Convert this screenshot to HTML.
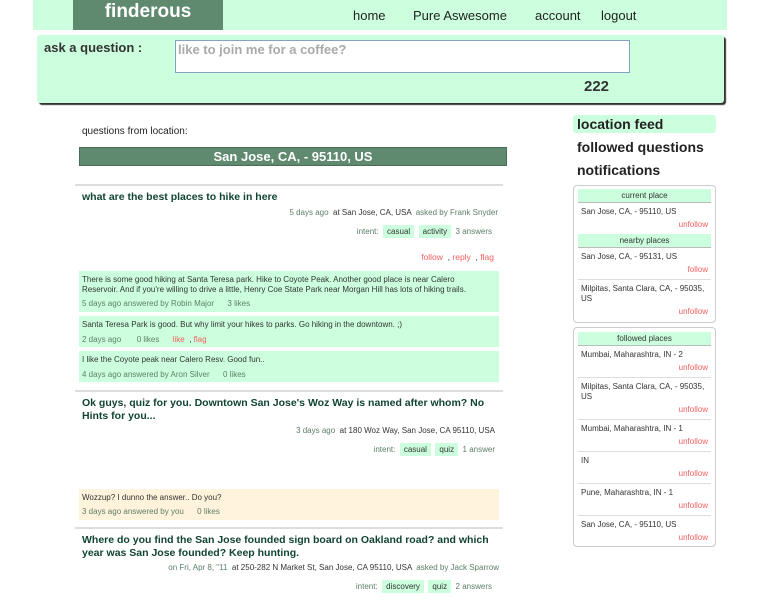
<!DOCTYPE html>
<html><head><meta charset="utf-8"><style>
*{margin:0;padding:0;box-sizing:border-box}
body{width:768px;height:600px;background:#fff;font-family:"Liberation Sans",sans-serif;position:relative;overflow:hidden;color:#222}
.a{position:absolute;white-space:nowrap}
.s{font-size:8px;color:#333}
.g{color:#5d7f68}
.r{color:#f06060}
.hd{font-weight:bold;font-size:10.5px;color:#143;}
.tag{background:#ccffdd;padding:2px 4px;color:#333}
.ans{position:absolute;left:79px;width:420px;background:#ccffdd}
.sep{position:absolute;left:75px;width:428px;height:2px;background:#ddd}
.box{position:absolute;left:573px;width:143px;border:1px solid #ccc;border-radius:4px;background:#fff}
.bh{background:#ccffdd;text-align:center;font-size:8px;color:#333;height:14px;line-height:14px;margin:0 4px;border-bottom:1px solid #bbb}
.it{font-size:8px;color:#333;padding:4px 3px 0;margin:0 4px;border-bottom:1px solid #ddd;position:relative;line-height:10px}
.it .u{display:block;text-align:right;color:#f06060;padding:3px 0 4px}
.nav{font-size:13px;top:8px}
.sb{font-size:14px;font-weight:bold;color:#222}
</style></head><body>
<div class="a" style="left:33px;top:0;width:694px;height:30px;background:#ccffdd"></div>
<div class="a" style="left:73px;top:0;width:150px;height:30px;background:#5f8a6f;color:#fff;font-weight:bold;font-size:19px;text-align:center;line-height:24px">finderous</div>
<div class="a nav" style="left:353px">home</div>
<div class="a nav" style="left:413px">Pure Aswesome</div>
<div class="a nav" style="left:535px">account</div>
<div class="a nav" style="left:601px">logout</div>

<div class="a" style="left:37px;top:35px;width:687px;height:68px;background:#ccffdd;border-radius:3px;box-shadow:2px 2px 1px #333"></div>
<div class="a" style="left:44px;top:40px;font-size:13px;font-weight:bold;color:#333">ask a question :</div>
<div class="a" style="left:175px;top:40px;width:455px;height:33px;background:#fff;border:1px solid #8aa0c0;font-size:13px;font-weight:bold;color:#aaa;padding:1px 2px">like to join me for a coffee?</div>
<div class="a" style="left:584px;top:78px;font-size:15px;font-weight:bold;color:#333">222</div>

<div class="a" style="left:82px;top:126px;font-size:10px;color:#222">questions from location:</div>
<div class="a" style="left:79px;top:147px;width:428px;height:19px;background:#5f8a6f;border:1px solid #4a6b55;color:#fff;font-weight:bold;font-size:13px;text-align:center;line-height:17px">San Jose, CA, - 95110, US</div>

<div class="sep" style="top:184px"></div>
<div class="a hd" style="left:82px;top:191px">what are the best places to hike in here</div>
<div class="a s" style="right:270px;top:208px"><span class="g">5 days ago</span>&nbsp; at San Jose, CA, USA &nbsp;<span class="g">asked by Frank Snyder</span></div>
<div class="a s" style="right:276px;top:227px"><span class="g">intent:</span> &nbsp;<span class="tag">casual</span> &nbsp;<span class="tag">activity</span> &nbsp;<span class="g">3 answers</span></div>
<div class="a s r" style="right:274px;top:252px;font-size:8.5px">follow &nbsp;<span style="color:#333">,</span> reply &nbsp;<span style="color:#333">,</span> flag</div>

<div class="ans" style="top:271px;height:41px"></div>
<div class="a s" style="left:82px;top:275px;line-height:10px">There is some good hiking at Santa Teresa park. Hike to Coyote Peak. Another good place is near Calero<br>Reservoir. And if you're willing to drive a little, Henry Coe State Park near Morgan Hill has lots of hiking trails.</div>
<div class="a s g" style="left:82px;top:299px">5 days ago answered by Robin Major &nbsp;&nbsp;&nbsp;&nbsp; 3 likes</div>
<div class="ans" style="top:316px;height:31px"></div>
<div class="a s" style="left:82px;top:320px">Santa Teresa Park is good. But why limit your hikes to parks. Go hiking in the downtown. ;)</div>
<div class="a s g" style="left:82px;top:335px">2 days ago &nbsp;&nbsp;&nbsp;&nbsp;&nbsp; 0 likes &nbsp;&nbsp;&nbsp;&nbsp; <span class="r">like</span> &nbsp;<span style="color:#333">,</span> <span class="r">flag</span></div>
<div class="ans" style="top:351px;height:31px"></div>
<div class="a s" style="left:82px;top:355px">I like the Coyote peak near Calero Resv. Good fun..</div>
<div class="a s g" style="left:82px;top:370px">4 days ago answered by Aron Silver &nbsp;&nbsp;&nbsp;&nbsp; 0 likes</div>

<div class="sep" style="top:390px"></div>
<div class="a hd" style="left:82px;top:397px;line-height:13px">Ok guys, quiz for you. Downtown San Jose's Woz Way is named after whom? No<br>Hints for you...</div>
<div class="a s" style="right:273px;top:426px"><span class="g">3 days ago</span>&nbsp; at 180 Woz Way, San Jose, CA 95110, USA</div>
<div class="a s" style="right:273px;top:445px"><span class="g">intent:</span> &nbsp;<span class="tag">casual</span> &nbsp;<span class="tag">quiz</span> &nbsp;<span class="g">1 answer</span></div>
<div class="ans" style="top:489px;height:31px;background:#fff3dc"></div>
<div class="a s" style="left:82px;top:493px">Wozzup? I dunno the answer.. Do you?</div>
<div class="a s g" style="left:82px;top:507px">3 days ago answered by you &nbsp;&nbsp;&nbsp;&nbsp; 0 likes</div>

<div class="sep" style="top:527px"></div>
<div class="a hd" style="left:82px;top:534px;line-height:13px">Where do you find the San Jose founded sign board on Oakland road? and which<br>year was San Jose founded? Keep hunting.</div>
<div class="a s" style="right:269px;top:563px"><span class="g">on Fri, Apr 8, "11</span>&nbsp; at 250-282 N Market St, San Jose, CA 95110, USA &nbsp;<span class="g">asked by Jack Sparrow</span></div>
<div class="a s" style="right:276px;top:582px"><span class="g">intent:</span> &nbsp;<span class="tag">discovery</span> &nbsp;<span class="tag">quiz</span> &nbsp;<span class="g">2 answers</span></div>

<div class="a" style="left:573px;top:115px;width:143px;height:18px;background:#ccffdd;border-radius:3px"></div>
<div class="a sb" style="left:577px;top:116px">location feed</div>
<div class="a sb" style="left:577px;top:139px">followed questions</div>
<div class="a sb" style="left:577px;top:162px">notifications</div>

<div class="box" style="top:185px;height:138px;padding-top:3px">
<div class="bh">current place</div>
<div class="it" style="border:0">San Jose, CA, - 95110, US<span class="u">unfollow</span></div>
<div class="bh">nearby places</div>
<div class="it">San Jose, CA, - 95131, US<span class="u">follow</span></div>
<div class="it" style="border:0">Milpitas, Santa Clara, CA, - 95035,<br>US<span class="u">unfollow</span></div>
</div>
<div class="box" style="top:327px;height:220px;padding-top:4px">
<div class="bh">followed places</div>
<div class="it">Mumbai, Maharashtra, IN - 2<span class="u">unfollow</span></div>
<div class="it">Milpitas, Santa Clara, CA, - 95035,<br>US<span class="u">unfollow</span></div>
<div class="it">Mumbai, Maharashtra, IN - 1<span class="u">unfollow</span></div>
<div class="it">IN<span class="u">unfollow</span></div>
<div class="it">Pune, Maharashtra, IN - 1<span class="u">unfollow</span></div>
<div class="it" style="border:0">San Jose, CA, - 95110, US<span class="u">unfollow</span></div>
</div>
</body></html>
